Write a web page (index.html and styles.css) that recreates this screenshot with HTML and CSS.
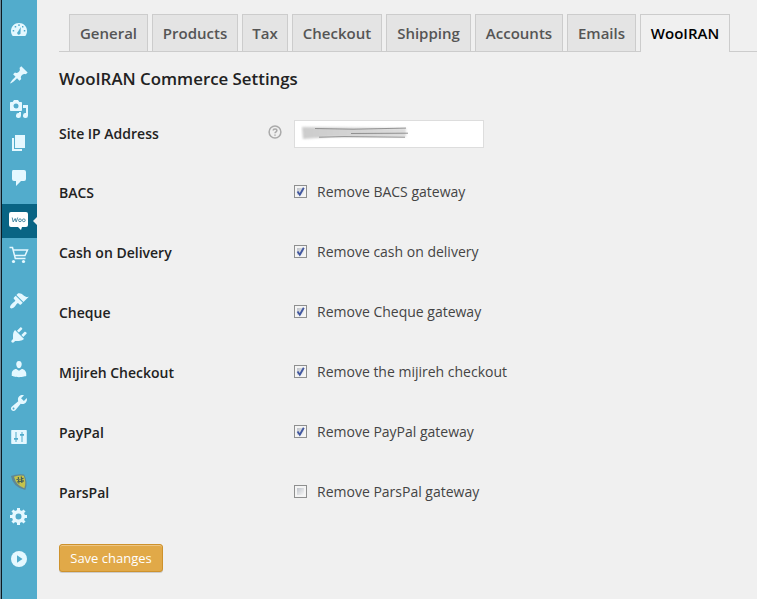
FILE: index.html
```html
<!DOCTYPE html>
<html lang="en">
<head>
<meta charset="utf-8">
<title>WooIRAN Commerce Settings</title>
<link rel="stylesheet" href="styles.css">
</head>
<body>
<div class="app">
<nav class="menu">
  <a class="item"><svg viewBox="0 0 20 20"><path d="M3.760 17h12.480C17.340 15.600 18 13.820 18 11.900 18 7.530 14.420 4 10 4S2 7.530 2 11.900c0 1.920.66 3.700 1.760 5.100z"/><g class="cut"><path d="M9.300 5.300h1.400v1.700H9.300zM5.700 7h1.500v1.500H5.700zM13 7h1.400v1.400H13zM3.700 11h1.500v1.500H3.700zM14.800 11h1.500v1.500h-1.500z"/><path d="M11.800 8l-.3 5.500a1.700 1.700 0 1 1-2.400-1z"/></g></svg></a>
  <a class="item gap"><svg viewBox="0 0 20 20"><path d="M10.440 3.020l1.820-1.820 6.360 6.350-1.830 1.820c-1.050-.68-2.480-.57-3.410.36l-.75.75c-.92.93-1.040 2.350-.35 3.410l-1.830 1.820-2.410-2.410-2.800 2.790c-.42.42-3.380 2.710-3.800 2.290s1.860-3.390 2.280-3.810l2.790-2.790L4.100 9.360l1.830-1.820c1.050.69 2.480.57 3.400-.36l.75-.75c.93-.92 1.050-2.350.36-3.410z"/></svg></a>
  <a class="item"><svg viewBox="0 0 20 20"><path fill-rule="evenodd" d="M13 11V4c0-.55-.45-1-1-1h-1.670L9 1H5L3.670 3H2c-.55 0-1 .45-1 1v7c0 .55.45 1 1 1h10c.55 0 1-.45 1-1zM7 4.500a2.500 2.500 0 1 1 0 5 2.500 2.500 0 0 1 0-5zM14 6h5v10.500a2.500 2.500 0 1 1-2-2.450V9h-3zM10 14.050V13h2v3.500a2.500 2.500 0 1 1-2-2.450z"/></svg></a>
  <a class="item"><svg viewBox="0 0 20 20"><path d="M6 15V2h10v13H6zm-1 1h8v2H3V5h2v11z"/></svg></a>
  <a class="item talk"><svg viewBox="0 0 20 20"><path d="M4 2h11q2 0 2 2v7q0 2-2 2h-3l-5 5v-5H5q-2 0-2-2V4q0-2 1-2z"/></svg></a>
  <a class="item current"><svg viewBox="0 0 20 20"><path class="white" d="M2 1h15q2 0 2 2v11q0 2-2 2h-4l-1 3-3-3H2q-2 0-2-2V3q0-2 2-2z"/><path class="woo" d="M3.200 6.500l1 4.500 2-3.500 1 3.500 1.500-4.500"/><circle class="woo" cx="11" cy="9.300" r="1.400"/><circle class="woo" cx="14.800" cy="9.300" r="1.400"/></svg></a>
  <a class="item"><svg viewBox="0 0 20 20"><path class="line" d="M.5 2.500h3l2.800 11h10.200M4.500 5h14L16 10.600H6"/><circle cx="4.500" cy="16.500" r="1.600"/><circle cx="14.500" cy="16.500" r="1.600"/></svg></a>
  <a class="item gap wide"><svg viewBox="0 0 20 20"><path d="M14.480 11.060L7.410 3.990l1.500-1.500c.5-.56 2.300-.47 3.510.32 1.210.8 1.430 1.280 2.910 2.100 1.180.64 2.450 1.260 4.450.85zm-.71.71L6.700 4.700 4.930 6.470c-.39.39-.39 1.020 0 1.410l1.060 1.060c.39.39.39 1.030 0 1.420-.6.6-1.430 1.110-2.210 1.690-.35.26-.7.53-1.010.84C1.430 14.230.4 16.080 1.400 17.070c.99 1 2.840-.03 4.180-1.360.31-.31.58-.66.85-1.020.57-.78 1.080-1.610 1.690-2.210.39-.39 1.020-.39 1.410 0l1.060 1.060c.39.39 1.020.39 1.410 0z"/></svg></a>
  <a class="item"><svg viewBox="0 0 20 20"><path d="M13.110 4.360L9.870 7.600 8 5.730l3.240-3.240c.35-.34 1.050-.2 1.560.32.52.51.66 1.210.31 1.550zm-8 1.770l.91-1.120 9.010 9.010-1.190.84c-.71.71-2.630 1.160-3.820 1.160H6.140L4.900 17.260c-.59.59-1.540.59-2.120 0-.59-.58-.59-1.530 0-2.120l1.240-1.240v-3.880c0-1.130.4-3.190 1.090-3.890zm7.260 3.970l3.240-3.240c.34-.35 1.040-.21 1.550.31.52.51.66 1.210.31 1.550l-3.240 3.250z"/></svg></a>
  <a class="item"><svg viewBox="0 0 20 20"><path d="M10 9.250c-2.270 0-2.730-3.440-2.730-3.440C7 4.020 7.820 2 9.970 2c2.160 0 2.980 2.020 2.710 3.810 0 0-.41 3.440-2.680 3.440zm0 2.570L12.720 10c2.390 0 4.520 2.330 4.520 4.530v2.490s-3.650 1.130-7.240 1.130c-3.650 0-7.240-1.130-7.240-1.130v-2.490c0-2.250 1.940-4.480 4.470-4.480z"/></svg></a>
  <a class="item"><svg viewBox="0 0 20 20"><path fill-rule="evenodd" d="M16.680 9.770c-1.340 1.340-3.300 1.670-4.950.99l-5.410 6.520c-.99.99-2.590.99-3.580 0s-.99-2.590 0-3.570l6.520-5.420c-.68-1.650-.35-3.610.99-4.950 1.280-1.280 3.120-1.620 4.720-1.060l-2.890 2.890 2.820 2.820 2.860-2.870c.53 1.580.18 3.390-1.080 4.650zM3.810 16.210c.4.39 1.040.39 1.430 0 .4-.4.4-1.040 0-1.430-.39-.4-1.030-.4-1.430 0-.39.39-.39 1.030 0 1.430z"/></svg></a>
  <a class="item"><svg viewBox="0 0 20 20"><rect x="2.200" y="3" width="15.600" height="14" rx=".7"/><path class="cut" d="M6.500 5h1v6H9v1.700H7.500V15h-1v-2.300H5V11h1.500zM12.500 5h1v2H15v1.700h-1.500V15h-1V8.700H11V7h1.500z"/></svg></a>
  <a class="item gap"><svg viewBox="0 0 20 20"><path class="shield-edge" d="M2 4Q8 1.500 15 2.500q4.500 8 1.300 15.500Q4 15.500 2 4z"/><path class="shield" d="M5 4.800Q10 2.800 14.700 3.700q3 7 .6 12.500Q7 13.500 5 4.800z"/><path class="hash" d="M9.300 5l.6 6.500M12.300 4.500l.6 6.500M7.500 7.500l7-1.200M8 10l7-1.200"/></svg></a>
  <a class="item"><svg viewBox="0 0 20 20"><path fill-rule="evenodd" d="M18 12h-2.180c-.17.7-.44 1.350-.81 1.930l1.540 1.540-2.100 2.100-1.540-1.540c-.58.36-1.230.63-1.910.79V19H8v-2.180c-.68-.16-1.330-.43-1.910-.79l-1.540 1.540-2.120-2.120 1.540-1.540c-.36-.58-.63-1.230-.79-1.910H1V9.030h2.170c.16-.7.44-1.350.8-1.940L2.430 5.550l2.100-2.100 1.540 1.540c.58-.37 1.240-.64 1.930-.81V2h3v2.180c.68.16 1.330.43 1.910.79l1.540-1.540 2.120 2.120-1.540 1.540c.36.59.64 1.240.8 1.940H18V12zM9.500 13.500a3 3 0 1 0 0-6 3 3 0 0 0 0 6z"/></svg></a>
  <a class="item collapse"><svg viewBox="0 0 20 20"><circle cx="10" cy="10" r="8"/><path class="cut" d="M8 6.300l5.500 3.700L8 13.700z"/></svg></a>
</nav>
<main class="content">
  <div class="tabs">
    <a class="tab t1">General</a><a class="tab t2">Products</a><a class="tab t3">Tax</a><a class="tab t4">Checkout</a><a class="tab t5">Shipping</a><a class="tab t6">Accounts</a><a class="tab t7">Emails</a><a class="tab t8 active">WooIRAN</a>
  </div>
  <h3><span>WooIRAN Commerce Settings</span></h3>
  <form class="form">
    <div class="row ip"><b>Site IP Address</b><svg class="help" viewBox="0 0 14 14"><circle cx="7" cy="7" r="5.900"/><path d="M5.200 5.600c0-2.300 3.700-2.300 3.700 0C8.900 6.800 7 6.900 7 8.300M7 9.400v1.300"/></svg>
      <div class="field"><svg viewBox="0 0 110 16"><defs><linearGradient id="smear"><stop offset="0" stop-color="#ccc"/><stop offset=".65" stop-color="#d6d6d6"/><stop offset="1" stop-color="#ddd"/></linearGradient></defs><path class="smear" d="M1 2l104 1v9L30 12 2 14z"/><g class="strokes"><path d="M14 3.500l38 .7 53-1.100"/><path d="M50 8.500l57-.3"/><path d="M18 12.200l25-.6 61 .6"/></g></svg></div></div>
    <div class="row"><b>BACS</b><i class="box on"><svg viewBox="0 0 13 13"><path d="M3.500 6.500l2.300 3.300 4-7"/></svg></i><span>Remove BACS gateway</span></div>
    <div class="row"><b>Cash on Delivery</b><i class="box on"><svg viewBox="0 0 13 13"><path d="M3.500 6.500l2.300 3.300 4-7"/></svg></i><span>Remove cash on delivery</span></div>
    <div class="row"><b>Cheque</b><i class="box on"><svg viewBox="0 0 13 13"><path d="M3.500 6.500l2.300 3.300 4-7"/></svg></i><span>Remove Cheque gateway</span></div>
    <div class="row"><b>Mijireh Checkout</b><i class="box on"><svg viewBox="0 0 13 13"><path d="M3.500 6.500l2.300 3.300 4-7"/></svg></i><span>Remove the mijireh checkout</span></div>
    <div class="row"><b>PayPal</b><i class="box on"><svg viewBox="0 0 13 13"><path d="M3.500 6.500l2.300 3.300 4-7"/></svg></i><span>Remove PayPal gateway</span></div>
    <div class="row"><b>ParsPal</b><i class="box"></i><span>Remove ParsPal gateway</span></div>
    <button type="button" class="save">Save changes</button>
  </form>
</main>
</div>
</body>
</html>
```
FILE: styles.css
```css
* { box-sizing: border-box; }
body { margin: 0; background: #f0f0f0; font-family: "Open Sans", sans-serif; font-size: 14px; color: #444; overflow: hidden; }
.app { display: flex; height: 599px; border-left: 1px solid #6d8b9b; }
.menu { width: 36px; flex: none; border-left: 1px solid #0b1a22; background: #52accc; padding-top: 12px; }
.item { display: block; position: relative; height: 34px; padding: 7px 0 0 7px; }
.item svg { display: block; width: 20px; height: 20px; fill: #e5f8ff; }
.gap { margin-top: 12px; }
.gap ~ .gap { margin-top: 11px; }
.gap.wide { margin-top: 12px; }
.talk { padding-top: 8px; }
.current { margin-top: 10px; background: #096484; }
.current::after { content: ""; position: absolute; right: 0; top: 13px; border: 4px solid transparent; border-left: 0; border-right-color: #f0f0f0; }
.item .cut { fill: #52accc; }
.item .white { fill: #fff; }
.item .woo { fill: none; stroke: #4b8ba4; stroke-width: 1; }
.item .line { fill: none; stroke: #e5f8ff; stroke-width: 1.5; }
.item .shield-edge { fill: #5f8795; }
.item .shield { fill: #c5c34b; }
.item .hash { fill: none; stroke: #44605a; stroke-width: 1.2; }
.collapse { margin-top: 9px; }
.content { flex: 1; padding: 14px 0 0 22px; }
.tabs { display: flex; gap: 4px; height: 38px; padding-left: 10px; border-bottom: 1px solid #ccc; }
.tab { flex: none; height: 37px; border: 1px solid #ccc; border-bottom: 0; background: #e4e4e4; color: #555; font-size: 15px; font-weight: 600; line-height: 37px; text-align: center; white-space: nowrap; }
.t1 { width: 79px; }
.t2 { width: 86px; }
.t3 { width: 46px; }
.t4 { width: 90px; }
.t5 { width: 85px; }
.t6 { width: 88px; }
.t7 { width: 69px; }
.t8 { width: 90px; }
.active { height: 38px; background: #f0f0f0; color: #000; }
h3 { margin: 14px 0 0; height: 26px; line-height: 26px; font-size: 16.850px; font-weight: 600; color: #222; }
.form { padding-top: 12px; }
.row { display: flex; align-items: center; height: 60px; }
.row b { width: 235px; font-weight: 600; color: #222; padding-top: 1px; }
.row span { margin: -2px 0 0 10px; }
.ip { height: 58px; }
.ip b { width: 209px; }
.help { width: 14px; height: 14px; margin: -3px 12px 0 0; fill: none; stroke: #aaa; stroke-width: 1.5; }
.field { width: 190px; height: 28px; margin-top: 2px; border: 1px solid #ddd; background: #fff; padding: 4px 0 0 6px; }
.field svg { display: block; width: 110px; height: 16px; }
.smear { fill: url(#smear); filter: blur(1.2px); }
.strokes { fill: none; stroke: #888; stroke-width: .9; filter: blur(.4px); }
.box { width: 13px; height: 13px; margin-top: -2px; border: 1px solid #8e8f8f; background: linear-gradient(135deg, #bfc3ca, #f6f6f6) 2px 2px / 7px 7px no-repeat #f4f4f4; }
.box svg { display: block; width: 13px; height: 13px; margin: -1px; fill: none; stroke: #4258a0; stroke-width: 1.9; }
.save { display: block; width: 104px; height: 28px; margin-top: 22px; padding: 0; border: 1px solid #ce922c; border-radius: 3px; background: #e1a948; color: #fff; font: 13px/26px "Open Sans", sans-serif; box-shadow: inset 0 1px 0 #ecc584, 0 1px 0 rgba(0,0,0,.15); }
```
